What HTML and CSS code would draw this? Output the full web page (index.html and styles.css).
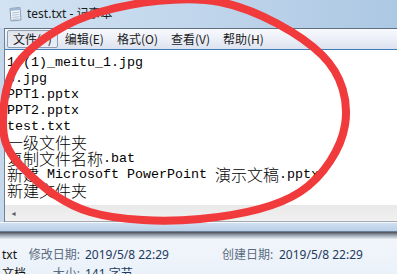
FILE: index.html
```html
<!DOCTYPE html>
<html lang="zh">
<head>
<meta charset="utf-8">
<title>test.txt - 记事本</title>
<link rel="stylesheet" href="styles.css">
</head>
<body>
<div class="page">
  <div class="titlebar">
    <svg class="app-icon" width="16" height="16" viewBox="0 0 16 16">
      <path d="M3 2.5 L13 1.5 L14 14 L4 15 Z" fill="#f4f7fb" stroke="#8a9bb0" stroke-width="1"/>
      <path d="M3 2.5 L13 1.5 L13.3 4 L3.3 5 Z" fill="#9fb6cf"/>
      <line x1="5" y1="7" x2="12" y2="6.3" stroke="#a9bfd6" stroke-width="1"/>
      <line x1="5.2" y1="9.2" x2="12.2" y2="8.5" stroke="#a9bfd6" stroke-width="1"/>
      <line x1="5.4" y1="11.4" x2="12.4" y2="10.7" stroke="#a9bfd6" stroke-width="1"/>
      <line x1="5.6" y1="13.4" x2="12.6" y2="12.7" stroke="#a9bfd6" stroke-width="1"/>
    </svg>
    <span class="title">test.txt - 记事本</span>
  </div>
  <div class="frame">
    <div class="client">
      <div class="menubar">
        <span class="mi pressed">文件(F)</span>
        <span class="mi">编辑(E)</span>
        <span class="mi">格式(O)</span>
        <span class="mi">查看(V)</span>
        <span class="mi">帮助(H)</span>
      </div>
      <div class="edit">
        <div class="text">
          <div class="ln">1 (1)_meitu_1.jpg</div>
          <div class="ln">b.jpg</div>
          <div class="ln">PPT1.pptx</div>
          <div class="ln">PPT2.pptx</div>
          <div class="ln">test.txt</div>
          <div class="ln"><span class="cjk">一级文件夹</span></div>
          <div class="ln"><span class="cjk">复制文件名称</span>.bat</div>
          <div class="ln"><span class="cjk">新建</span> Microsoft PowerPoint <span class="cjk">演示文稿</span>.pptx</div>
          <div class="ln"><span class="cjk">新建文件夹</span></div>
        </div>
        <div class="hscroll"><span class="arrow">◂</span></div>
      </div>
    </div>
    <div class="frame-bottom"></div>
  </div>
  <div class="shadow"></div>
  <div class="details">
    <div class="row">
      <span class="name">txt</span>
      <span class="label">修改日期:</span>
      <span class="value">2019/5/8 22:29</span>
      <span class="label2">创建日期:</span>
      <span class="value">2019/5/8 22:29</span>
    </div>
    <div class="row">
      <span class="name">文档</span>
      <span class="label">大小:</span>
      <span class="value">141 字节</span>
    </div>
  </div>
  <svg class="mark" width="397" height="274" viewBox="0 0 397 274">
    <path d="M3 120 C3.3 102.2 5.8 76 22 58 C38.2 40 67 21.3 100 12 C133 2.7 183 -5.2 220 2 C257 9.2 301.2 34.5 322 55 C342.8 75.5 348.7 102.2 345 125 C341.3 147.8 324.2 176.3 300 192 C275.8 207.7 235 215.7 200 219 C165 222.3 120 221 90 212 C60 203 34.5 180.3 20 165 C5.5 149.7 2.7 137.8 3 120 Z" fill="none" stroke="#f03a3c" stroke-width="8"/>
  </svg>
</div>
</body>
</html>
```

FILE: styles.css
```css
html, body {
  margin: 0;
  padding: 0;
}
body {
  width: 397px;
  height: 274px;
  overflow: hidden;
  font-family: "Noto Sans", "Noto Sans CJK SC", sans-serif;
  font-size: 12px;
}
.page {
  position: relative;
  width: 397px;
  height: 274px;
  overflow: hidden;
  background: #eef3f9;
}
.titlebar {
  height: 28px;
  display: flex;
  align-items: center;
  padding-left: 7px;
  box-sizing: border-box;
  background: linear-gradient(to right, #d3e3f3 0%, #c2d7ec 45%, #adc8e3 100%);
  color: #1b1b1b;
}
.app-icon {
  flex: none;
  margin-right: 4px;
}
.title {
  font-size: 12px;
  line-height: 16px;
}
.frame {
  padding-left: 4px;
  background: #c5d8ec;
}
.client {
  border-top: 1px solid #5f6f82;
  border-left: 1px solid #6f8196;
}
.menubar {
  height: 20px;
  display: flex;
  align-items: center;
  gap: 1px;
  padding-left: 2px;
  background: linear-gradient(to bottom, #f7f9fc 0%, #eceff7 50%, #dce2ef 100%);
  font-family: "Noto Sans CJK SC", "Noto Sans", sans-serif;
  font-size: 12px;
  color: #1a1a1a;
}
.mi {
  padding: 0 5px;
  height: 16px;
  line-height: 16px;
  border: 1px solid transparent;
  white-space: nowrap;
}
.mi.pressed {
  border-color: #8e9db2;
  background: linear-gradient(to bottom, #dfe4ee, #e9edf5);
  border-radius: 2px;
}
.edit {
  border-top: 1px solid #3f7db8;
  background: #fff;
  border-bottom: 1px solid #a3a9b3;
}
.text {
  height: 155px;
  padding: 5px 0 0 2px;
  box-sizing: border-box;
  font-family: "Liberation Mono", monospace;
  font-size: 13.333px;
  color: #000;
}
.ln {
  display: flex;
  align-items: center;
  height: 16px;
  line-height: 16px;
  white-space: pre;
}
.cjk {
  font-family: "Noto Sans CJK SC", sans-serif;
  font-size: 16px;
  font-weight: 300;
  line-height: 16px;
  margin-top: -3px;
}
.hscroll {
  height: 16px;
  background: linear-gradient(to bottom, #e9e9e9, #f1f1f1);
  display: flex;
  align-items: center;
}
.arrow {
  width: 17px;
  text-align: center;
  font-size: 8px;
  color: #5d5d5d;
  font-family: "DejaVu Sans", sans-serif;
}
.frame-bottom {
  height: 8px;
  border-top: 1px solid #f4f8fc;
  border-bottom: 1px solid #6d7f95;
  background: linear-gradient(to bottom, #cfe0f1, #b8cfe6);
  margin-left: -4px;
}
.shadow {
  height: 7px;
  background: linear-gradient(to bottom, #4a4f57 0%, #9aa3ae 45%, #e6edf5 100%);
}
.details {
  padding-top: 6px;
  background: linear-gradient(to bottom, #f2f6fb, #eaf1f9);
  height: 36px;
  box-sizing: border-box;
  font-family: "Noto Sans", "Noto Sans CJK SC", sans-serif;
  font-size: 12px;
}
.row {
  display: grid;
  grid-template-columns: 28px 57px 137px 57px auto;
  height: 19px;
  line-height: 19px;
  white-space: nowrap;
}
.name {
  color: #111;
  padding-left: 2px;
}
.label, .label2 {
  color: #5b6c82;
  text-align: right;
  padding-right: 5px;
}
.label2 {
  padding-right: 6px;
}
.value {
  color: #1e3a5e;
}
.mark {
  position: absolute;
  left: 0;
  top: 0;
}
```
